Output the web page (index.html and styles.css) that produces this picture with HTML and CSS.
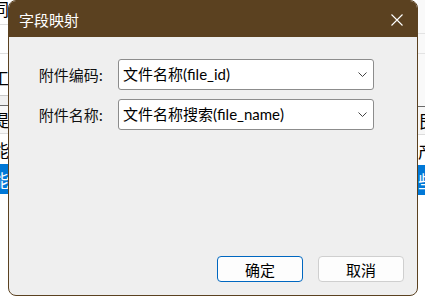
FILE: index.html
```html
<!DOCTYPE html>
<html lang="zh">
<head>
<meta charset="utf-8">
<title>字段映射</title>
<link rel="stylesheet" href="styles.css">
</head>
<body>
<div class="bg">
  <div class="strip strip-left">
    <div class="cell r-a">同</div>
    <div class="cell r-b"></div>
    <div class="cell r-c">工</div>
    <div class="cell r-d"></div>
    <div class="cell r-e">提</div>
    <div class="cell r-f">能</div>
    <div class="cell r-g">能</div>
  </div>
  <div class="strip strip-right">
    <div class="cell s-a"></div>
    <div class="cell s-b"></div>
    <div class="cell s-c"></div>
    <div class="cell r-e">艮</div>
    <div class="cell r-f">产</div>
    <div class="cell r-g">些</div>
  </div>
</div>

<div class="dialog">
  <div class="titlebar">
    <span class="title">字段映射</span>
    <svg class="close" width="12" height="12" viewBox="0 0 12 12">
      <path d="M0.5 0.5 L11.5 11.5 M11.5 0.5 L0.5 11.5" stroke="#ffffff" stroke-width="1.1" fill="none"/>
    </svg>
  </div>
  <div class="body">
    <div class="form">
      <label class="label">附件编码:</label>
      <div class="select">
        <span class="value">文件名称(file_id)</span>
        <svg class="chev" width="9" height="5" viewBox="0 0 9 5"><path d="M0.5 0.5 L4.5 4.5 L8.5 0.5" stroke="#444" stroke-width="1" fill="none"/></svg>
      </div>
      <label class="label">附件名称:</label>
      <div class="select">
        <span class="value">文件名称搜索(file_name)</span>
        <svg class="chev" width="9" height="5" viewBox="0 0 9 5"><path d="M0.5 0.5 L4.5 4.5 L8.5 0.5" stroke="#444" stroke-width="1" fill="none"/></svg>
      </div>
    </div>
    <div class="footer">
      <button class="btn btn-primary">确定</button>
      <button class="btn">取消</button>
    </div>
  </div>
</div>
</body>
</html>
```
FILE: styles.css
```css
html, body {
  margin: 0;
  padding: 0;
}
body {
  width: 425px;
  height: 304px;
  overflow: hidden;
  background: #ffffff;
  font-family: "Noto Sans", "Noto Sans CJK SC", sans-serif;
  color: #000;
  position: relative;
}

/* background table strips */
.bg {
  display: flex;
  justify-content: space-between;
  height: 304px;
}
.strip {
  width: 8px;
  overflow: hidden;
  display: flex;
  flex-direction: column;
}
.cell {
  display: flex;
  align-items: center;
  white-space: nowrap;
  font-family: "Noto Sans CJK SC", sans-serif;
  font-size: 17px;
  line-height: 1;
  flex: none;
}
.strip-left .cell { justify-content: flex-end; margin-right: -1px; }
.strip-right .cell { justify-content: flex-start; padding-left: 1px; }

.r-a { height: 24px; border-bottom: 1px solid #dedede; align-items: flex-start; }
.r-b { height: 28px; border-bottom: 1px solid #dedede; }
.r-c { height: 42px; border-bottom: 1px solid #c8c8c8; padding-top: 6px; box-sizing: border-box; }
.r-d { height: 9px; background: #f0f0f0; border-bottom: 1px solid #6a6a6a; }
.r-e { height: 27px; background: #f7f7f7; border-bottom: 1px solid #dcdcdc; }
.r-f { height: 30px; background: #ffffff; }
.r-g { height: 30px; background: #0078d7; color: #ffffff; }

.s-a { height: 33px; background: #f9f9f9; border-bottom: 1px solid #e3e3e3; }
.s-b { height: 19px; background: #f9f9f9; border-bottom: 1px solid #e3e3e3; }
.s-c { height: 52px; background: #f9f9f9; border-bottom: 1px solid #6a6a6a; }

/* dialog */
.dialog {
  position: absolute;
  left: 8px;
  top: 0;
  width: 410px;
  height: 296px;
  box-sizing: border-box;
  border: 1px solid #5b4120;
  border-radius: 8px;
  background: #efefef;
  overflow: hidden;
  display: flex;
  flex-direction: column;
}
.titlebar {
  height: 36px;
  background: #5b4120;
  display: flex;
  align-items: center;
  justify-content: space-between;
  padding: 0 14px 0 10px;
  flex: none;
}
.title {
  color: #ffffff;
  font-family: "Noto Sans CJK SC", sans-serif;
  font-size: 15px;
  line-height: 1;
  padding-top: 1px;
}
.close {
  display: block;
  margin-top: 1px;
}
.body {
  flex: 1;
  display: flex;
  flex-direction: column;
  padding: 22px 13px 13px 0;
}
.form {
  display: grid;
  grid-template-columns: 94px 256px;
  column-gap: 15px;
  row-gap: 9px;
  align-items: center;
}
.label {
  text-align: right;
  font-family: "Noto Sans CJK SC", sans-serif;
  font-size: 15px;
  line-height: 1;
  color: #111;
  padding-bottom: 1px;
}
.select {
  height: 31px;
  box-sizing: border-box;
  border: 1px solid #8c8c8c;
  border-radius: 3px;
  background: #ffffff;
  display: flex;
  align-items: center;
  justify-content: space-between;
  padding: 0 6px 0 4px;
}
.value {
  font-family: "Lato", "Noto Sans CJK SC", sans-serif;
  font-size: 15px;
  line-height: 1;
  white-space: nowrap;
  color: #000;
}
.chev {
  display: block;
}
.footer {
  margin-top: auto;
  display: flex;
  justify-content: flex-end;
  gap: 15px;
}
.btn {
  width: 86px;
  height: 26px;
  box-sizing: border-box;
  border: 1px solid #cfcfcf;
  border-radius: 4px;
  background: #fdfdfd;
  font-family: "Noto Sans CJK SC", sans-serif;
  font-size: 15px;
  line-height: 1;
  color: #000;
  padding: 0;
}
.btn-primary {
  border-color: #0067c0;
}
```
